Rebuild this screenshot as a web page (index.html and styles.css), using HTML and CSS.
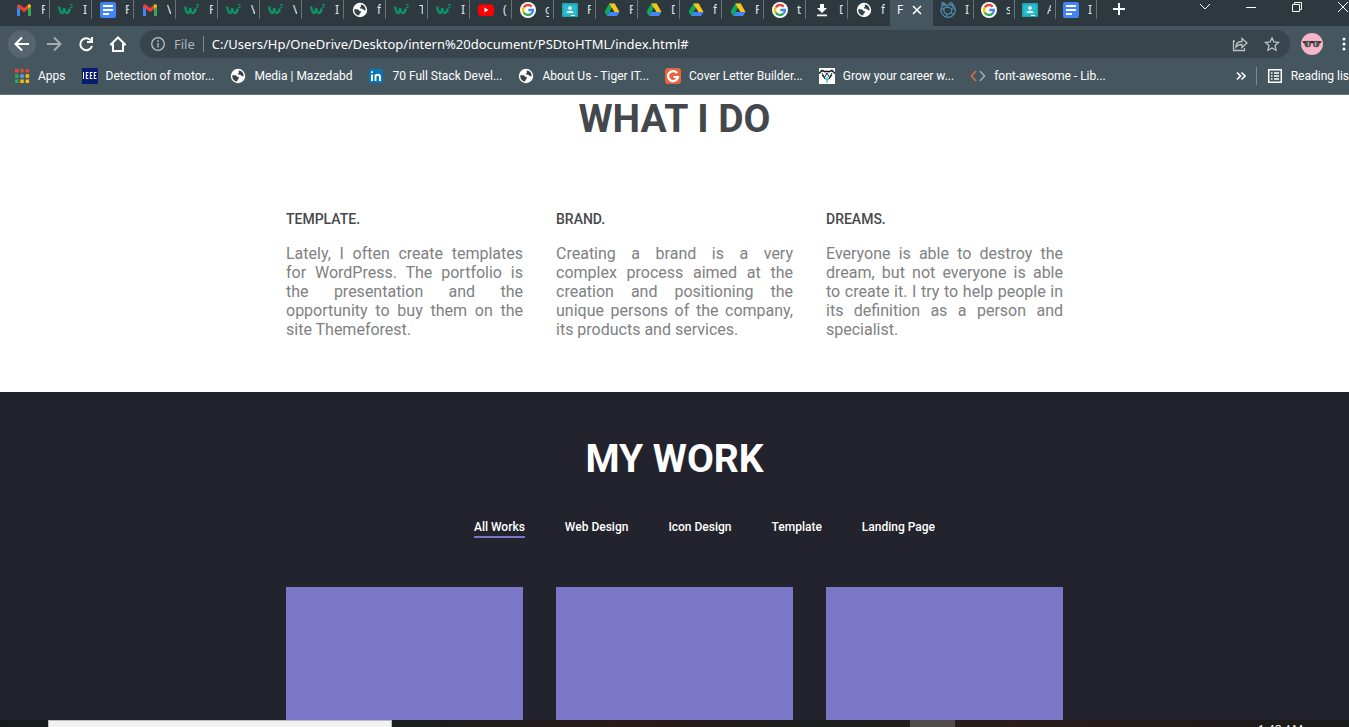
FILE: index.html
```html
<!DOCTYPE html>
<html lang="en">
<head>
<meta charset="utf-8">
<title>Portfolio</title>
<link rel="stylesheet" href="styles.css">
</head>
<body>
<svg class="defs" aria-hidden="true">
  <symbol id="gmail" viewBox="0 0 16 16"><path d="M1 4v10h3V7z" fill="#4285f4"/><path d="M15 4v10h-3V7z" fill="#34a853"/><path d="M1 4.500C1 2 3.400 2.200 4 2.800L8 6l4-3.200V7L8 10.200 4 7 1 5z" fill="#ea4335"/><path d="M12 2.800c1-.9 3-.6 3 1.700L12 7z" fill="#fbbc04"/></symbol>
  <symbol id="w3" viewBox="0 0 16 16"><path d="M1 4.500c.6 3 1.600 6 3 6.500 1.300 0 2-3 2.300-5C6.500 8 7.300 11 8.700 11c1.500 0 2.600-2.500 3.300-4.500" fill="none" stroke="#109166" stroke-width="2.500"/><path d="M12 2.500h2.500L13.300 4c1.800 0 1.400 2-1.300 1.500" fill="none" stroke="#109166"/></symbol>
  <symbol id="docs" viewBox="0 0 16 16"><rect width="16" height="16" rx="2" fill="#4285f4"/><path d="M3 4h10M3 8h10M3 12h6" stroke="#fff" stroke-width="1.800"/></symbol>
  <symbol id="globe" viewBox="0 0 16 16"><circle cx="8" cy="8" r="7.200" fill="#fff"/><path d="M2.300 7.300h3.200c1.200 0 1 1.700 2.500 1.700 1.300 0 1.300 1.500.3 2-.9.400-.6 1.500-1.300 2.600-3-.4-5-2.800-4.700-6.300zM9 2.400c2.800.4 4.700 2.600 4.700 5.600-.9.800-2.200 0-2.700-.8-.8-1-3 0-3.200-1.200-.1-1 1.400-.8 1.200-1.800-.1-.6-.6-.9 0-1.800z" fill="#344149"/></symbol>
  <symbol id="youtube" viewBox="0 0 16 16"><rect y="2.500" width="16" height="11.500" rx="3" fill="#f00"/><path d="M6.500 5.500v5l4-2.500z" fill="#fff"/></symbol>
  <symbol id="google" viewBox="0 0 16 16"><circle cx="8" cy="8" r="8" fill="#fff"/><g fill="none" stroke-width="2.300"><path d="M3.800 5.300A5 5 0 0 1 11.700 4.600" stroke="#ea4335"/><path d="M3.800 5.300a5 5 0 0 0 0 5.400" stroke="#fbbc04"/><path d="M3.800 10.700a5 5 0 0 0 7.600 1" stroke="#34a853"/><path d="M11.400 11.700A5 5 0 0 0 13 8H8.300" stroke="#4285f4"/></g></symbol>
  <symbol id="classroom" viewBox="0 0 16 16"><rect y="1" width="16" height="14" rx="1" fill="#1fa4b5"/><rect x="1.500" y="2.500" width="13" height="11" fill="#26bccb"/><circle cx="8" cy="6" r="1.800" fill="#fff"/><path d="M4.500 11c0-3 7-3 7 0zM9 13h4v1H9z" fill="#fff"/></symbol>
  <symbol id="drive" viewBox="0 0 16 16"><path d="M5.300 1.500h5.400L8 6 3.200 14 .5 9.700z" fill="#12a85b"/><path d="M5.300 1.500h5.400L15.500 10h-5.300z" fill="#fcc419"/><path d="M5.500 10h10L13 14H3.200z" fill="#4285f4"/><path d="M8 6l2.300 4H5.600z" fill="#2d393f"/></symbol>
  <symbol id="download" viewBox="0 0 16 16"><path d="M6 2h4v4h3l-5 5-5-5h3zM3 12.500h10v1.800H3z" fill="#fff"/></symbol>
  <symbol id="atom" viewBox="0 0 16 16"><g fill="none" stroke="#4e8caf" stroke-width="1.200"><path d="M6 1.200A7.200 7.200 0 1 0 12 2"/><path d="M3 1l3 3 4-2.500M12 2l1 4 2.500 2M4 6l4-1 4 2-1 4-4 1.500L4 10zM4 6l-3 2M7 12.500L6 15M11 11l3 1"/><circle cx="3" cy="2" r="1.300"/><circle cx="11" cy="2" r="1.300"/></g></symbol>
  <symbol id="ieee" viewBox="0 0 16 16"><rect width="16" height="16" fill="#071b70"/><path d="M1.500 4v7M4 4.500h2.500M4 7.500h2M4 10.500h2.500M4.300 4v7M8 4.500h2.500M8 7.500h2M8 10.500h2.500M8.300 4v7M12 4.500h2.500M12 7.500h2M12 10.500h2.500M12.300 4v7" stroke="#fff"/></symbol>
  <symbol id="linkedin" viewBox="0 0 16 16"><rect x="1" y="1" width="14" height="14" rx="1" fill="#0877b9"/><path d="M4 6.500V13M4 3.200v1.900M7.500 13V6.500M7.500 9c0-3 4.500-3 4.500 0v4" fill="none" stroke="#fff" stroke-width="1.900"/></symbol>
  <symbol id="gorange" viewBox="0 0 16 16"><rect width="16" height="16" rx="3" fill="#e8663f"/><path d="M12 5A5 5 0 1 0 13 9H8.500" fill="none" stroke="#fff" stroke-width="2.200"/></symbol>
  <symbol id="grow" viewBox="0 0 16 16"><rect width="16" height="16" fill="#fff"/><path d="M0 5.500l3-3 3 1.300 2-.5 2 .5 3-1.300 3 3" fill="none" stroke="#111a24" stroke-width="1.500"/><path d="M3 5l2.500 4.500L8 5l2.500 4.500L13 5M3 7l3 4M13 7l-3 4" fill="none" stroke="#111a24"/><path d="M8 9v6M6 10.500l2 2 2-2" fill="none" stroke="#3dbdc8" stroke-width="1.200"/></symbol>
  <symbol id="code" viewBox="0 0 16 16"><path d="M6 3L1.500 8 6 13" fill="none" stroke="#d96a45" stroke-width="1.700"/><path d="M10 3l4.500 5L10 13" fill="none" stroke="#9ba7b2" stroke-width="1.700"/></symbol>
  <symbol id="apps" viewBox="0 0 16 16"><path d="M1 1h3.500v3.500H1zM6.300 1h3.500v3.500H6.300zM11.600 1h3.500v3.500h-3.500z" fill="#ea4335"/><path d="M1 6.300h3.500v3.500H1zM1 11.600h3.500v3.500H1z" fill="#34a853"/><path d="M6.300 6.300h3.500v3.500H6.300z" fill="#4fa2f7"/><path d="M11.600 6.300h3.500v3.500h-3.500zM6.300 11.600h3.500v3.500H6.300zM11.600 11.600h3.500v3.500h-3.500z" fill="#fbbc04"/></symbol>
  <symbol id="list" viewBox="0 0 16 16"><path d="M1.700 1.700h12.600v12.600H1.700zM4 5h1.500M7 5h5M4 8h1.500M7 8h5M4 11h1.500M7 11h5" fill="none" stroke="#fff" stroke-width="1.500"/></symbol>
</svg>

<header class="browser">
  <div class="tab-strip">
    <div class="tab"><svg><use href="#gmail"/></svg><span>F</span></div>
    <div class="tab"><svg><use href="#w3"/></svg><span>I</span></div>
    <div class="tab"><svg><use href="#docs"/></svg><span>F</span></div>
    <div class="tab"><svg><use href="#gmail"/></svg><span>V</span></div>
    <div class="tab"><svg><use href="#w3"/></svg><span>F</span></div>
    <div class="tab"><svg><use href="#w3"/></svg><span>V</span></div>
    <div class="tab"><svg><use href="#w3"/></svg><span>V</span></div>
    <div class="tab"><svg><use href="#w3"/></svg><span>I</span></div>
    <div class="tab"><svg><use href="#globe"/></svg><span>f</span></div>
    <div class="tab"><svg><use href="#w3"/></svg><span>T</span></div>
    <div class="tab"><svg><use href="#w3"/></svg><span>I</span></div>
    <div class="tab"><svg><use href="#youtube"/></svg><span>(</span></div>
    <div class="tab"><svg><use href="#google"/></svg><span>g</span></div>
    <div class="tab"><svg><use href="#classroom"/></svg><span>F</span></div>
    <div class="tab"><svg><use href="#drive"/></svg><span>F</span></div>
    <div class="tab"><svg><use href="#drive"/></svg><span>D</span></div>
    <div class="tab"><svg><use href="#drive"/></svg><span>f</span></div>
    <div class="tab"><svg><use href="#drive"/></svg><span>F</span></div>
    <div class="tab"><svg><use href="#google"/></svg><span>t</span></div>
    <div class="tab"><svg><use href="#download"/></svg><span>D</span></div>
    <div class="tab before-active"><svg><use href="#globe"/></svg><span>f</span></div>
    <div class="tab active"><span>F</span><button aria-label="Close tab"><svg viewBox="0 0 10 10"><path d="M1 1l8 8M9 1L1 9" stroke="#fff" stroke-width="1.600"/></svg></button></div>
    <div class="tab late"><svg><use href="#atom"/></svg><span>I</span></div>
    <div class="tab late"><svg><use href="#google"/></svg><span>s</span></div>
    <div class="tab late"><svg><use href="#classroom"/></svg><span>A</span></div>
    <div class="tab late"><svg><use href="#docs"/></svg><span>I</span></div>
    <button class="new-tab" aria-label="New tab"><svg viewBox="0 0 12 12"><path d="M6 0v12M0 6h12" stroke="#fff" stroke-width="2"/></svg></button>
    <div class="window-controls">
      <button aria-label="Search tabs"><svg viewBox="0 0 12 12"><path d="M1 3l5 5 5-5"/></svg></button>
      <button aria-label="Minimize"><svg viewBox="0 0 12 12"><path d="M1 6.500h10"/></svg></button>
      <button aria-label="Restore"><svg viewBox="0 0 12 12"><path d="M1.500 3.500h7v7h-7zM3.500 3.500v-2h7v7h-2"/></svg></button>
      <button aria-label="Close"><svg viewBox="0 0 12 12"><path d="M1 1l10 10M11 1L1 11"/></svg></button>
    </div>
  </div>

  <div class="toolbar">
    <button class="nav-button back" aria-label="Back"><svg viewBox="0 0 16 16"><path d="M15 8H2M8 1.500L1.500 8 8 14.500"/></svg></button>
    <button class="nav-button forward" aria-label="Forward"><svg viewBox="0 0 16 16"><path d="M1 8h13M8 1.500L14.500 8 8 14.500"/></svg></button>
    <button class="nav-button" aria-label="Reload"><svg viewBox="0 0 16 16"><path d="M13 4.500A6 6 0 1 0 14 10M14 1v5H9"/></svg></button>
    <button class="nav-button" aria-label="Home"><svg viewBox="0 0 16 16"><path d="M.8 8.500L8 1.500l7.200 7H13V15H3V8.500z"/></svg></button>
    <div class="address">
      <svg class="info" viewBox="0 0 16 16"><circle cx="8" cy="8" r="6.300"/><path d="M8 7v4.500M8 4.200V6"/></svg>
      <label for="url">File</label>
      <input id="url" type="text" value="C:/Users/Hp/OneDrive/Desktop/intern%20document/PSDtoHTML/index.html#">
      <button aria-label="Share"><svg viewBox="0 0 16 16"><path d="M3 5H1.500v9.500h11V12M4 11c0-4 3-5.500 6-5.500V2.500L15 7l-5 4.500v-3C7 8.500 5.500 9 4 11z"/></svg></button>
      <button aria-label="Bookmark"><svg viewBox="0 0 16 16"><path d="M8 1.800l1.900 4.200 4.600.5-3.400 3.100.9 4.600L8 11.900l-4 2.300.9-4.600L1.500 6.500l4.600-.5z"/></svg></button>
    </div>
    <button class="profile" aria-label="Profile"><svg viewBox="0 0 22 22"><circle cx="11" cy="11" r="11" fill="#f4b6c8"/><path d="M1 8.500l3-.5h14l3 .5-2 2h-6l-2-.5-2 .5H3z" fill="#2f2528"/><circle cx="6.800" cy="11" r="3.300" fill="#55514f"/><circle cx="15.200" cy="11" r="3.300" fill="#55514f"/><path d="M7.500 9v4M14.500 9v4" stroke="#aaa49c" stroke-width="1.500"/></svg></button>
    <button class="menu" aria-label="Menu"><svg viewBox="0 0 4 16"><circle cx="2" cy="3" r="1.500"/><circle cx="2" cy="8" r="1.500"/><circle cx="2" cy="13" r="1.500"/></svg></button>
  </div>

  <nav class="bookmarks" aria-label="Bookmarks">
    <a href="#"><svg><use href="#apps"/></svg>Apps</a>
    <a href="#"><svg><use href="#ieee"/></svg>Detection of motor...</a>
    <a href="#"><svg><use href="#globe"/></svg>Media | Mazedabd</a>
    <a href="#"><svg><use href="#linkedin"/></svg>70 Full Stack Devel...</a>
    <a href="#"><svg><use href="#globe"/></svg>About Us - Tiger IT...</a>
    <a href="#"><svg><use href="#gorange"/></svg>Cover Letter Builder...</a>
    <a href="#"><svg><use href="#grow"/></svg>Grow your career w...</a>
    <a href="#"><svg><use href="#code"/></svg>font-awesome - Lib...</a>
    <div class="bookmark-end">
      <button aria-label="More bookmarks"><svg viewBox="0 0 10 10"><path d="M1 1.500L4.500 5 1 8.500M5.500 1.500L9 5 5.500 8.500" fill="none" stroke="#fff" stroke-width="1.600"/></svg></button>
      <a href="#"><svg><use href="#list"/></svg>Reading list</a>
    </div>
  </nav>
</header>

<main class="page">
  <section class="services">
    <h2>WHAT I DO</h2>
    <div class="columns">
      <article><h3>TEMPLATE.</h3><p>Lately, I often create templates for WordPress. The portfolio is the presentation and the opportunity to buy them on the site Themeforest.</p></article>
      <article><h3>BRAND.</h3><p>Creating a brand is a very complex process aimed at the creation and positioning the unique persons of the company, its products and services.</p></article>
      <article><h3>DREAMS.</h3><p>Everyone is able to destroy the dream, but not everyone is able to create it. I try to help people in its definition as a person and specialist.</p></article>
    </div>
  </section>
  <section class="work">
    <h2>MY WORK</h2>
    <nav class="filters" aria-label="Work filters">
      <a class="selected" href="#">All Works</a>
      <a href="#">Web Design</a>
      <a href="#">Icon Design</a>
      <a href="#">Template</a>
      <a href="#">Landing Page</a>
    </nav>
    <div class="columns">
      <div class="tile"></div>
      <div class="tile"></div>
      <div class="tile"></div>
    </div>
  </section>
</main>

<footer class="taskbar">
  <div class="search"></div>
  <div class="running"></div>
  <time>1:48 AM</time>
</footer>
</body>
</html>
```
FILE: styles.css
```css
* { box-sizing: border-box; }
body {
  margin: 0;
  height: 100vh;
  display: flex;
  flex-direction: column;
  overflow: hidden;
  font-family: Roboto, "Liberation Sans", sans-serif;
  background: #fff;
}
.defs { display: none; }
a { color: inherit; text-decoration: none; }
button { border: 0; padding: 0; background: none; color: inherit; display: grid; place-items: center; flex: none; }
svg { display: block; flex: none; }

.browser {
  flex: none;
  background: #45565f;
  color: #fff;
  font-family: "Noto Sans", "Open Sans", sans-serif;
  font-size: 12px;
  border-bottom: 1px solid #66757d;
  overflow: hidden;
}
.tab-strip { display: flex; height: 26px; padding-left: 8px; background: #2d393f; }
.tab { flex: none; width: 42px; height: 19px; padding-left: 8px; display: flex; align-items: center; gap: 9px; border-right: 1px solid #66737a; }
.tab svg { width: 16px; height: 16px; }
.tab span { width: 4px; overflow: hidden; line-height: 18px; color: #dfe4e7; }
.tab.before-active { border-color: transparent; }
.tab.active { width: 43px; height: 26px; padding: 0 0 7px 7px; background: #45565f; border: 0; gap: 8px; }
.tab.active span { width: 7px; color: #fff; }
.tab.active svg { width: 10px; height: 10px; }
.tab.late { width: 41px; padding-left: 7px; }
.new-tab { width: 44px; height: 18px; }
.new-tab svg { width: 12px; height: 12px; }
.window-controls { display: flex; margin-left: auto; margin-right: -17px; }
.window-controls button { width: 46px; height: 13px; }
.window-controls svg { width: 12px; height: 12px; fill: none; stroke: #fff; }

.toolbar { display: flex; align-items: center; height: 36px; padding-left: 8px; }
.nav-button { width: 28px; height: 28px; margin-right: 4px; border-radius: 14px; }
.nav-button svg { width: 16px; height: 16px; fill: none; stroke: #fff; stroke-width: 2; }
.back { background: #57666e; }
.forward { opacity: .5; }
.address { flex: 1; height: 28px; margin-left: 4px; padding: 0 8px 0 10px; display: flex; align-items: center; border-radius: 14px; background: #39454c; color: #aeb7bc; }
.address svg { width: 16px; height: 16px; fill: none; stroke: #b9c1c5; stroke-width: 1.3; }
.address label { margin: 0 8px; padding-right: 8px; border-right: 1px solid #7d878c; line-height: 16px; font-size: 13px; }
.address input { flex: 1; min-width: 0; padding: 0; border: 0; background: none; color: #fff; font: inherit; font-size: 13px; }
.address button { width: 20px; height: 20px; margin-left: 12px; }
.profile { margin-left: 11px; }
.profile svg { width: 22px; height: 22px; }
.menu { width: 42px; margin-right: -16px; }
.menu svg { width: 4px; height: 16px; fill: #fff; }

.bookmarks { display: flex; align-items: center; height: 32px; padding: 0 0 4px 14px; white-space: nowrap; font-family: Roboto, sans-serif; }
.bookmarks a { display: flex; align-items: center; gap: 8px; margin-right: 16px; line-height: 18px; }
.bookmarks a svg { width: 16px; height: 16px; }
.bookmark-end { flex: none; display: flex; align-items: center; margin-left: auto; }
.bookmark-end button svg { width: 10px; height: 10px; }
.bookmark-end a { margin: 0 -4px 0 10px; padding-left: 10px; border-left: 1px solid #7c8990; }

.page { flex: 1; min-height: 0; overflow: hidden; display: flex; flex-direction: column; }
h2 { margin: 0; font-size: 39px; line-height: 48px; font-weight: 700; text-align: center; }
.columns { width: 90%; max-width: 777px; margin: 0 auto; display: grid; grid-template-columns: repeat(3, 1fr); gap: 33px; }
.services { flex: none; padding-bottom: 53px; color: #44484c; }
.services .columns { margin-top: 67px; }
h3 { margin: 0 0 16px; font-size: 14px; line-height: 18px; font-weight: 500; color: #48484a; }
p { margin: 0; font-size: 16px; line-height: 19px; color: #808182; text-align: justify; }
.work { flex: 1 0 auto; padding-top: 43px; background: #23232e; color: #fff; }
.filters { display: flex; justify-content: center; gap: 40px; margin: 36px 0 49px; padding-left: 60px; font-size: 12px; line-height: 16px; font-weight: 500; }
.filters a { padding-bottom: 1px; border-bottom: 2px solid transparent; }
.filters .selected { border-color: #7c76c8; }
.tile { height: 240px; background: #7c76c8; }

.taskbar { flex: none; display: flex; height: 7px; padding-left: 48px; overflow: hidden; background: linear-gradient(90deg, #171a1c, #1c1e1f 30%, #2b1b19 48%, #1c1e1f 60%, #2a1d1a 75%, #1a1b1b); }
.search { width: 344px; background: #f2f2f2; border: 1px solid #bbb; border-bottom: 0; }
.running { width: 45px; margin-left: 518px; background: #514b49; }
.taskbar time { margin: 0 46px 0 auto; font: 12px/20px "Open Sans", sans-serif; color: #fff; }
```
